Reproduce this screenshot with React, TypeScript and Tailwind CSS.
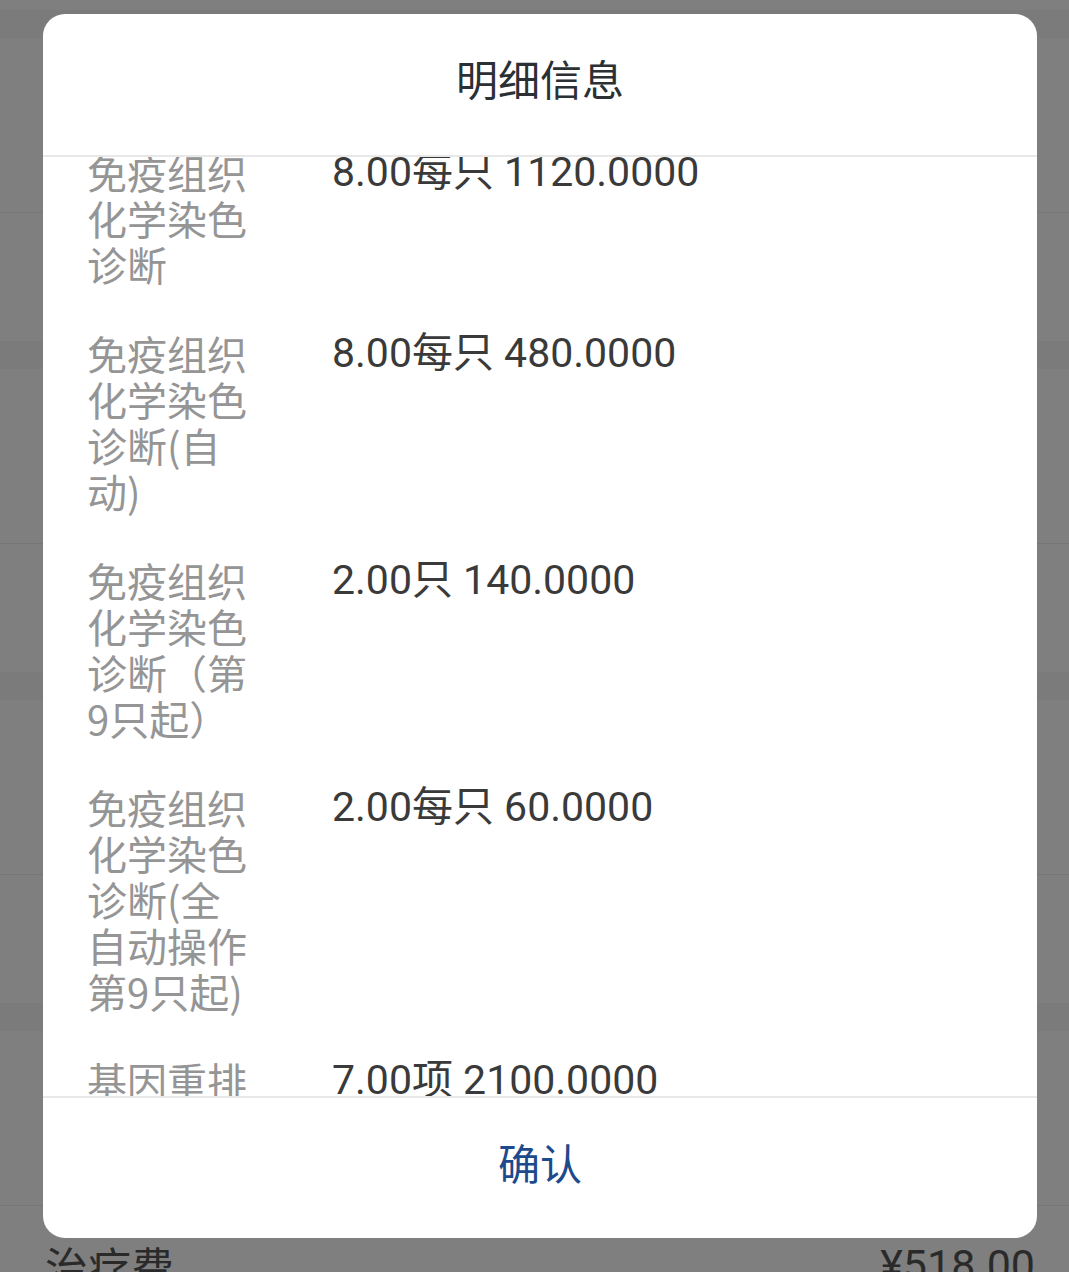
import React from "react";

const rows: { label: string; value: string }[] = [
  { label: "免疫组织化学染色诊断", value: "8.00每只 1120.0000" },
  { label: "免疫组织化学染色诊断(自动)", value: "8.00每只 480.0000" },
  { label: "免疫组织化学染色诊断（第9只起）", value: "2.00只 140.0000" },
  { label: "免疫组织化学染色诊断(全自动操作第9只起)", value: "2.00每只 60.0000" },
  { label: "基因重排", value: "7.00项 2100.0000" },
];

function Section() {
  return (
    <>
      <div className="h-[28px] bg-[#f6f6f6]" />
      <div className="h-[174px] bg-white" />
      <div className="h-[1px] bg-[#ececec]" />
      <div className="h-[128px] bg-white" />
    </>
  );
}

export default function App() {
  return (
    <div
      className="relative w-[1069px] h-[1272px] overflow-hidden bg-white"
      style={{ fontFamily: '"Noto Sans CJK SC", "Noto Sans", sans-serif' }}
    >
      {/* underlying page */}
      <div className="flex flex-col">
        <div className="h-[10px] bg-white" />
        <Section />
        <Section />
        <Section />
        <div className="h-[28px] bg-[#f6f6f6]" />
        <div className="h-[174px] bg-white" />
        <div className="h-[1px] bg-[#ececec]" />
        <div className="flex h-[80px] items-center justify-between bg-white pl-[45px] pr-[34px] pt-[38px] text-[43px] text-[#555]">
          <span>治疗费</span>
          <span style={{ fontFamily: 'Roboto, "Noto Sans CJK SC", sans-serif' }}>¥518.00</span>
        </div>
      </div>

      {/* overlay */}
      <div className="absolute inset-0 bg-black/50">
        <div className="ml-[43px] mt-[14px] flex h-[1224px] w-[994px] flex-col overflow-hidden rounded-[22px] bg-white">
          <div className="flex h-[141px] shrink-0 items-center justify-center pb-[14px] text-[42px] text-[#2b3034]">
            明细信息
          </div>
          <div className="h-[2px] shrink-0 bg-[#e8e8e8]" />
          <div className="flex-1 overflow-hidden">
            <div className="-mt-[8px] flex flex-col gap-[43px] pl-[44px]">
              {rows.map((r, i) => (
                <div key={i} className="flex leading-[46px]">
                  <div className="w-[162px] shrink-0 text-[40px] text-[#959595]">{r.label}</div>
                  <div
                    className="ml-[83px] text-[41px] text-[#3a3a3a]"
                    style={{ fontFamily: 'Roboto, "Noto Sans CJK SC", sans-serif' }}
                  >
                    {r.value}
                  </div>
                </div>
              ))}
            </div>
          </div>
          <div className="h-[2px] shrink-0 bg-[#e8e8e8]" />
          <div className="flex h-[140px] shrink-0 items-center justify-center pb-[14px] text-[42px] text-[#1c4a8c]">
            确认
          </div>
        </div>
      </div>
    </div>
  );
}
